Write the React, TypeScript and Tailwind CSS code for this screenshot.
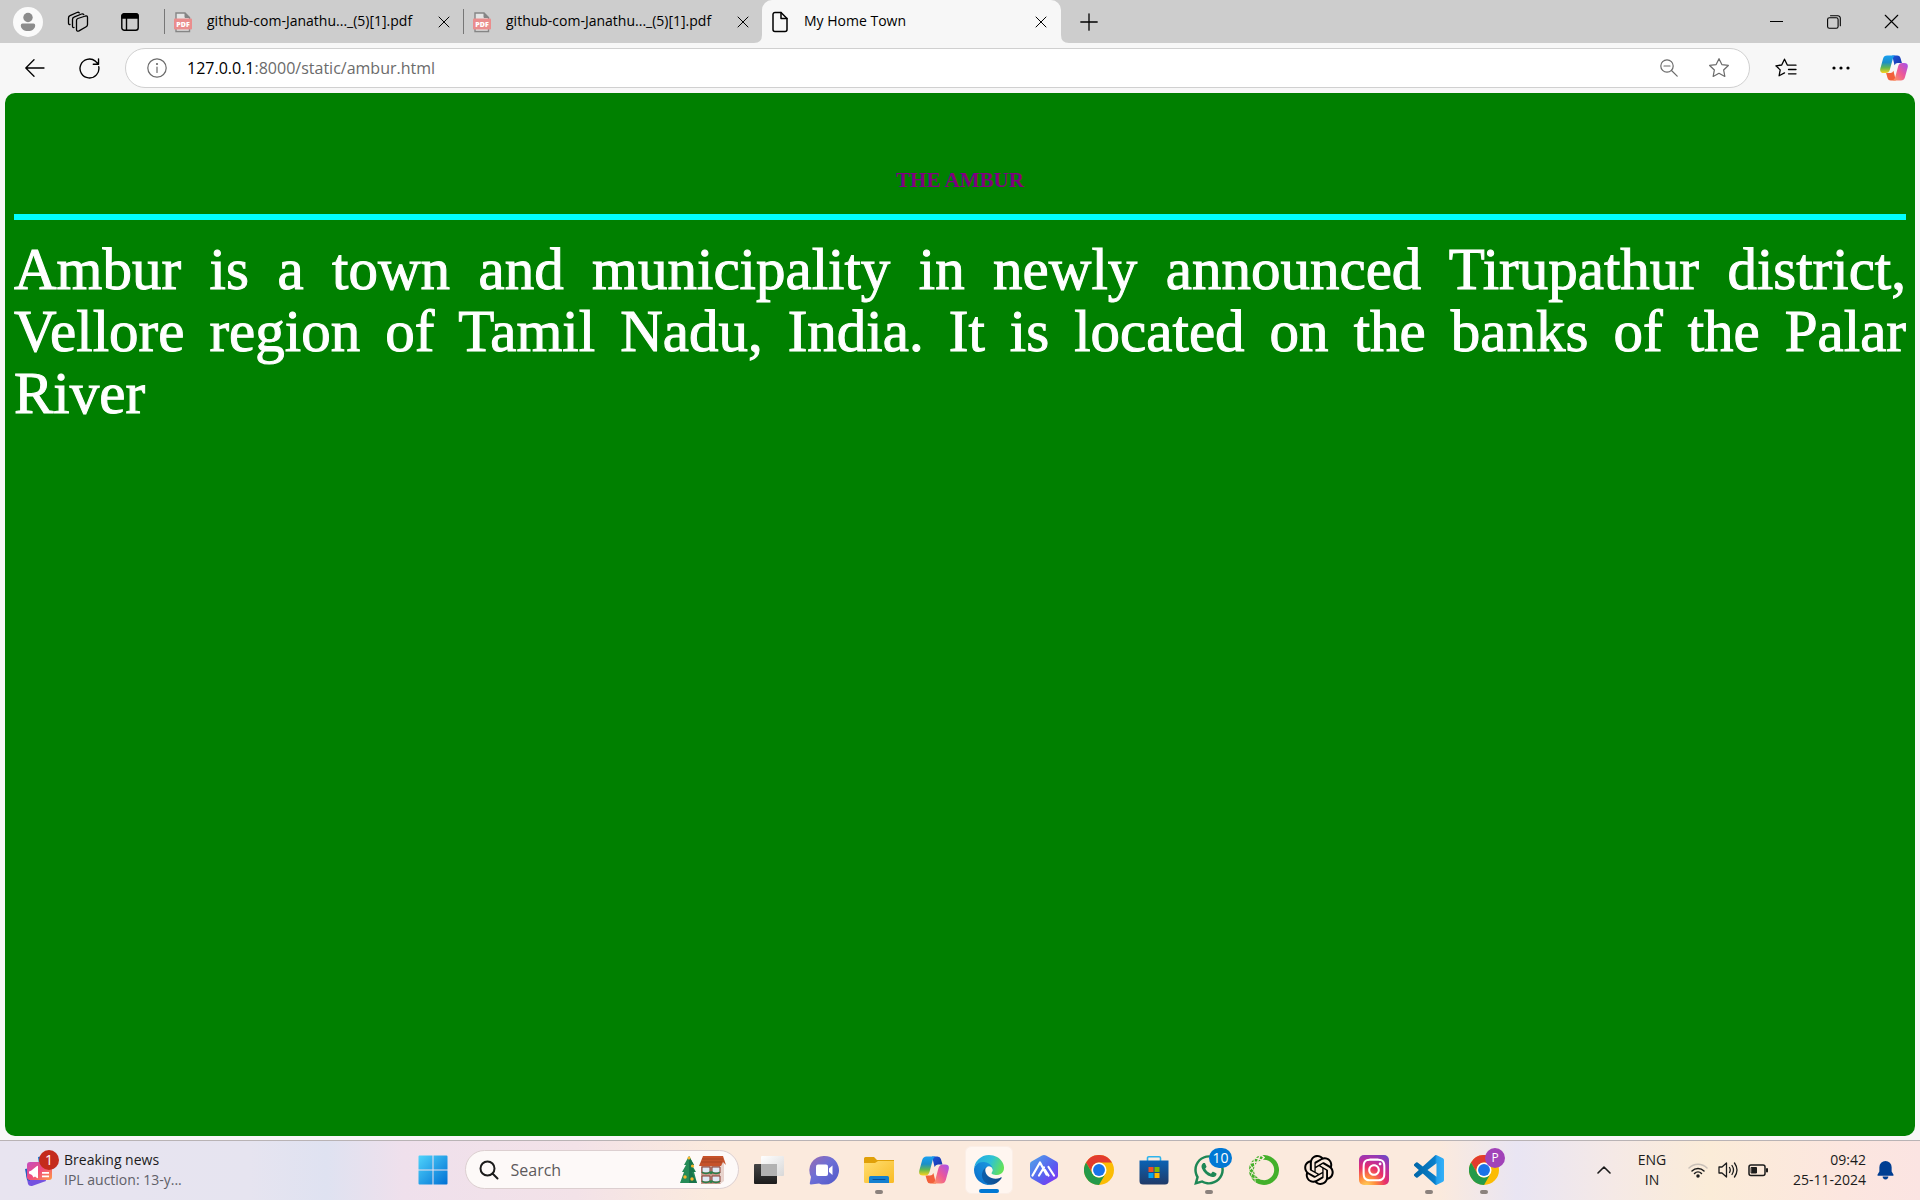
import React from "react";
import { FaInstagram, FaWhatsapp } from "react-icons/fa";
import { RiOpenaiFill } from "react-icons/ri";
import { SiAnaconda } from "react-icons/si";

const line = { fill: "none", stroke: "currentColor", strokeLinecap: "round", strokeLinejoin: "round" } as const;

function PdfIcon() {
  return (
    <svg viewBox="0 0 20 22" className="h-[22px] w-5 shrink-0">
      <path d="M3 2h9l4.500 4.500V20.500H3z" fill="#e4e4e4" stroke="#858585" strokeWidth="1.400" />
      <path d="M12 2v4.500h4.500" fill="#858585" stroke="#858585" />
      <rect x="1" y="7.500" width="18" height="11" rx="1" fill="#ea8d8d" />
      <text x="10" y="15.800" textAnchor="middle" fontSize="7" fontWeight="800" fill="#fff" fontFamily="Open Sans, sans-serif">PDF</text>
    </svg>
  );
}

function Cross({ className }: { className: string }) {
  return (
    <svg viewBox="0 0 12 12" className={className} {...line}>
      <path d="M1 1l10 10M11 1L1 11" />
    </svg>
  );
}

function PdfTab() {
  return (
    <div className="flex h-full w-[299px] items-center pr-2 pl-2">
      <PdfIcon />
      <span className="ml-3.5 flex-1 pb-0.5 text-sm whitespace-nowrap">github-com-Janathu..._(5)[1].pdf</span>
      <button type="button" aria-label="Close tab" className="flex h-6 w-6 items-center justify-center">
        <Cross className="h-3 w-3" />
      </button>
    </div>
  );
}

function TitleBar() {
  return (
    <header className="flex h-[43px] items-center bg-[#cdcdcd]">
      <button type="button" aria-label="Profile" className="ml-3 flex h-8 w-8 items-center justify-center">
        <svg viewBox="0 0 30 30" className="h-[30px] w-[30px]">
          <circle cx="15" cy="15" r="15" fill="#fafafa" />
          <circle cx="15" cy="10.500" r="4.700" fill="#8c8c8c" />
          <path d="M9.500 16.500h11a1.700 1.700 0 0 1 1.700 1.700c0 3.500-3 5.800-7.200 5.800s-7.200-2.300-7.200-5.800a1.700 1.700 0 0 1 1.700-1.700z" fill="#8c8c8c" />
        </svg>
      </button>
      <button type="button" aria-label="Workspaces" className="ml-[22px] flex h-8 w-6 items-center justify-center">
        <svg viewBox="0 0 22 22" className="h-[22px] w-[22px]" {...line} strokeWidth="1.300">
          <path d="M9.500 9.500q0-1.500 1.300-2l7.700-2.500q2-.5 2 1.500v7q0 1.500-1.300 2.200l-7.200 4.200q-2.500 1-2.500-1.500z" />
          <path d="M7 16.500q-1.500.5-1.500-1.500V8.500q0-1.700 1.500-2.300L14.500 3q1.500-.6 2.300.6" />
          <path d="M3 13.500q-1.500.3-1.500-1.500V7q0-1.700 1.500-2.300L10 1.500q1.500-.6 2.300.4" />
        </svg>
      </button>
      <button type="button" aria-label="Tab actions" className="ml-7 flex h-8 w-6 items-center justify-center">
        <svg viewBox="0 0 18 18" className="h-[18px] w-[18px]" {...line} strokeWidth="1.400">
          <rect x=".8" y=".8" width="16.400" height="16.400" rx="2.500" />
          <path d="M1 5V3a2 2 0 0 1 2-2h12a2 2 0 0 1 2 2v2z" fill="currentColor" />
          <path d="M5.500 5v12" />
        </svg>
      </button>
      <div className="ml-[22px] h-[25px] w-px bg-[#777]" />
      <PdfTab />
      <div className="-ml-px h-[25px] w-px bg-[#777]" />
      <PdfTab />
      <div className="relative -ml-px flex h-full w-[299px] items-center rounded-t-[10px] bg-[#f7f7f7] pr-2 pl-2">
        <svg viewBox="0 0 8 8" className="absolute bottom-0 -left-2 h-2 w-2"><path d="M8 0v8H0q8 0 8-8" fill="#f7f7f7" /></svg>
        <svg viewBox="0 0 8 8" className="absolute -right-2 bottom-0 h-2 w-2"><path d="M0 0v8h8Q0 8 0 0" fill="#f7f7f7" /></svg>
        <svg viewBox="0 0 20 22" className="h-[22px] w-5" {...line} strokeWidth="1.500">
          <path d="M5 1.500h6L17 7.500v11a2 2 0 0 1-2 2H5a2 2 0 0 1-2-2v-15a2 2 0 0 1 2-2z" />
          <path d="M11 1.500v6h6" />
        </svg>
        <span className="ml-3.5 flex-1 pb-0.5 text-sm">My Home Town</span>
        <button type="button" aria-label="Close tab" className="flex h-6 w-6 items-center justify-center">
          <Cross className="h-3 w-3" />
        </button>
      </div>
      <button type="button" aria-label="New tab" className="ml-3 flex h-8 w-8 items-center justify-center">
        <svg viewBox="0 0 18 18" className="h-[18px] w-[18px]" {...line}><path d="M9 .8v16.400M.8 9h16.400" strokeWidth="1.300" /></svg>
      </button>
      <div className="ml-auto flex h-full">
        <button type="button" aria-label="Minimize" className="flex w-[57px] items-center justify-center">
          <span className="h-px w-[13px] bg-black" />
        </button>
        <button type="button" aria-label="Restore" className="flex w-[57px] items-center justify-center">
          <svg viewBox="0 0 14 14" className="h-3.5 w-3.5" {...line} strokeWidth="1.100">
            <rect x=".6" y="2.800" width="10.500" height="10.500" rx="1.800" />
            <path d="M3.500.7h7.200a2.500 2.500 0 0 1 2.600 2.500v7.500" />
          </svg>
        </button>
        <button type="button" aria-label="Close" className="flex w-[58px] items-center justify-center">
          <Cross className="h-[15px] w-[15px] stroke-[0.9]" />
        </button>
      </div>
    </header>
  );
}

const STAR = "M10 1.500l2.600 5.400 5.900.8-4.300 4.100 1.100 5.900-5.300-2.900-5.300 2.900 1.100-5.900L1.500 7.700l5.900-.8z";

function Copilot({ id, className }: { id: string; className: string }) {
  return (
    <svg viewBox="0 0 30 28" className={className}>
      <defs>
        <linearGradient id={id + "a"} x1="0" y1="0" x2="0" y2="1">
          <stop offset="0" stopColor="#18a0f2" /><stop offset=".4" stopColor="#1c8fc8" /><stop offset=".7" stopColor="#65b84f" /><stop offset="1" stopColor="#ffd21c" />
        </linearGradient>
        <linearGradient id={id + "b"} x1="1" y1="0" x2="0" y2="1">
          <stop offset="0" stopColor="#a351f0" /><stop offset=".5" stopColor="#ec5899" /><stop offset="1" stopColor="#ff9b5c" />
        </linearGradient>
        <linearGradient id={id + "c"} x1="0" y1="0" x2="1" y2="1">
          <stop offset="0" stopColor="#1d56d8" /><stop offset="1" stopColor="#1832a8" />
        </linearGradient>
      </defs>
      <path d="M13 .5h5.500q2.700 0 3.400 2.500l1.600 5.500h-4.500q-2.500 0-3.400 2.500z" fill={"url(#" + id + "c)"} />
      <path d="M17 27.500h-5.500q-2.700 0-3.400-2.500l-1.600-5.500H11q2.500 0 3.400-2.500z" fill="#f2603a" />
      <path d="M7.500.5h9q-2 .8-2.700 3.200L10.500 16q-1 3.500-4.500 3.500H4Q-.8 19.500.3 14.500L3.200 4Q4.200.5 7.500.5z" fill={"url(#" + id + "a)"} />
      <path d="M22.500 27.500h-9q2-.8 2.700-3.200L19.500 12q1-3.500 4.500-3.500h2q4.800 0 3.700 5L26.800 24q-1 3.500-4.300 3.500z" fill={"url(#" + id + "b)"} />
    </svg>
  );
}

function Toolbar() {
  return (
    <div className="flex h-[50px] items-center bg-[#f7f7f7]">
      <button type="button" aria-label="Back" className="ml-4 flex h-9 w-[38px] items-center justify-center">
        <svg viewBox="0 0 20 20" className="h-5 w-5" {...line} strokeWidth="1.300"><path d="M19 10H1M9 1.800L.8 10 9 18.200" /></svg>
      </button>
      <button type="button" aria-label="Refresh" className="ml-4 flex h-9 w-[38px] items-center justify-center">
        <svg viewBox="0 0 20 20" className="h-[21px] w-[21px]" {...line} strokeWidth="1.300">
          <path d="M18.800 8.300a9 9 0 1 1-3.200-5.300l2.900 2.700M18.600.8v5.200h-5" />
        </svg>
      </button>
      <div className="ml-[17px] flex h-10 flex-1 items-center rounded-full border border-[#d0d0d0] bg-white text-[#6b6b6b]">
        <svg viewBox="0 0 20 20" className="ml-[21px] h-5 w-5 shrink-0" {...line} strokeWidth="1.200">
          <circle cx="10" cy="10" r="9.200" /><path d="M10 9v5.500" /><circle cx="10" cy="6" r=".5" />
        </svg>
        <div className="ml-5 flex-1 text-base"><a href="#page" aria-label="Page address"><span className="text-black">127.0.0.1</span>:8000/static/ambur.html</a></div>
        <button type="button" aria-label="Zoom" className="flex h-8 w-[50px] items-center justify-center">
          <svg viewBox="0 0 18 18" className="h-[18px] w-[18px]" {...line} strokeWidth="1.200"><circle cx="7" cy="7" r="6.200" /><path d="M11.500 11.500l5.700 5.700M4 7h6" /></svg>
        </button>
        <button type="button" aria-label="Favorite" className="mr-[5px] flex h-8 w-[50px] items-center justify-center">
          <svg viewBox="0 0 20 20" className="h-[22px] w-[22px]" {...line} strokeWidth="1.100"><path d={STAR} /></svg>
        </button>
      </div>
      <button type="button" aria-label="Favorites list" className="ml-2 flex h-9 w-[55px] items-center justify-center">
        <svg viewBox="0 0 22 20" className="h-5 w-[22px]" {...line} strokeWidth="1.300">
          <path d="M13.500 7.200l-1.200-.2L9.500 1.200 6.700 7 .9 7.800l4.300 4.100-1.100 5.900 5.400-2.900M13.500 7.200h7.500M13.500 11.500h7.500M13.500 15.800h7.500" />
        </svg>
      </button>
      <button type="button" aria-label="More" className="flex h-9 w-[55px] items-center justify-center">
        <svg viewBox="0 0 18 4" className="h-1 w-[18px]"><circle cx="2" cy="2" r="1.600" /><circle cx="9" cy="2" r="1.600" /><circle cx="16" cy="2" r="1.600" /></svg>
      </button>
      <button type="button" aria-label="Copilot" className="flex h-9 w-[52px] items-center justify-center">
        <Copilot id="top" className="h-[26px] w-7" />
      </button>
    </div>
  );
}

function Page() {
  return (
    <main id="page" className="mx-[5px] mb-1 flex-1 rounded-[10px] bg-[#008000] px-[9px] pt-[75px] font-['Liberation_Serif',serif]">
      <h1 className="text-center text-[21px] leading-6 font-bold text-[#800080]">THE AMBUR</h1>
      <hr className="mt-[22px] h-1.5 border-0 bg-[#00ffff]" />
      <p className="mt-[18px] text-[59px] leading-[62px] text-white [-webkit-text-stroke:1px_white]">
        <span className="block whitespace-nowrap [text-align-last:justify]">Ambur is a town and municipality in newly announced Tirupathur district,</span>
        <span className="block whitespace-nowrap [text-align-last:justify]">Vellore region of Tamil Nadu, India. It is located on the banks of the Palar</span>
        <span className="block">River</span>
      </p>
    </main>
  );
}

function News() {
  return (
    <svg viewBox="0 0 36 40" className="h-10 w-9 shrink-0">
      <defs>
        <linearGradient id="news" x1="0" y1="0" x2="1" y2="1"><stop offset="0" stopColor="#c44dc0" /><stop offset=".5" stopColor="#f04c7c" /><stop offset="1" stopColor="#ff9a45" /></linearGradient>
      </defs>
      <path d="M14 7l14-3 3 14-15 3z" fill="#1473d0" />
      <path d="M2 24l18-2 2 9-14 5q-3 .5-4-2z" fill="#7552e0" />
      <path d="M1 19l5-1v13l-3-1z" fill="#245fc0" />
      <rect x="3" y="12" width="25" height="18" rx="3" fill="url(#news)" />
      <path d="M5 21.500l2-.8 6-4.700q1-.5 1 .5v11q0 1-1 .5l-2-1.500-1.500 1-1.500-2.500-3-1.500zM18 22h7v1.700h-7zM18 25.500h7v1.700h-7z" fill="#fff" />
      <circle cx="25" cy="10" r="10" fill="#c42b1c" />
      <text x="25" y="15" textAnchor="middle" fontSize="14" fill="#fff" fontFamily="Open Sans, sans-serif">1</text>
    </svg>
  );
}

function FestiveArt() {
  return (
    <svg viewBox="0 0 46 30" className="h-[30px] w-[46px]">
      <path d="M9 1l5 9h-2l4 7h-2l3 11H0l4-11H2l4-7H4z" fill="#258b57" />
      <path d="M9 1l5 9h-3l4 7h-3l5 11H9z" fill="#17734a" />
      <g fill="#f7b52c"><circle cx="9" cy="3" r="1.500" /><circle cx="12.500" cy="11" r="1.600" /><circle cx="5" cy="22" r="1.700" /><circle cx="12" cy="24" r="1.700" /></g>
      <path d="M21 11h20v18H21z" fill="#c79a8c" /><path d="M40 9l4-5v22l-4 3z" fill="#e8d3cd" />
      <path d="M23 1h20l3 9-3-3-2 4H19z" fill="#c5522b" />
      <path d="M22 4h21M21 7h21" stroke="#963c20" strokeWidth=".6" />
      {[12, 21].map((y) => (
        <g key={y}><path d={"M22 " + y + "h8v6h-8zM32 " + y + "h8v6h-8z"} fill="#dfeaf6" stroke="#883d35" /><path d={"M22 " + (y + 5) + "q4 3 8 0q1 3 2 0q4 3 8 0"} fill="none" stroke="#27814a" strokeWidth="1.500" /></g>
      ))}
    </svg>
  );
}

function Chrome() {
  return (
    <svg viewBox="0 0 48 48" className="h-[30px] w-[30px]">
      <circle cx="24" cy="24" r="24" fill="#fbbc04" />
      <path d="M3.200 12a24 24 0 0 1 41.600 0H24a12 12 0 0 0-10.400 18z" fill="#e33b2e" />
      <path d="M3.200 12A24 24 0 0 0 24 48l10.400-18A12 12 0 0 1 13.600 30z" fill="#249a49" />
      <circle cx="24" cy="24" r="12" fill="#fff" /><circle cx="24" cy="24" r="9.500" fill="#1a73e8" />
    </svg>
  );
}

function Edge() {
  return (
    <svg viewBox="0 0 256 256" className="h-[30px] w-[30px]">
      <defs>
        <linearGradient id="e1" x1=".2" y1="0" x2="1" y2="0"><stop offset="0" stopColor="#0c5da8" /><stop offset="1" stopColor="#114a8b" /></linearGradient>
        <linearGradient id="e2" x1="1" y1="0" x2="0" y2="1"><stop offset="0" stopColor="#1b9de2" /><stop offset=".6" stopColor="#1280d4" /><stop offset="1" stopColor="#0767c8" /></linearGradient>
        <linearGradient id="e3" x1="0" y1=".2" x2="1" y2=".5"><stop offset="0" stopColor="#24a8e4" /><stop offset=".55" stopColor="#2fc2d4" /><stop offset="1" stopColor="#64e259" /></linearGradient>
      </defs>
      <path fill="url(#e1)" d="M231.070 190.540c-3.430 1.790-6.960 3.370-10.580 4.740a101.580 101.580 0 0 1-35.900 6.460c-47.320 0-88.540-32.550-88.540-74.320A31.480 31.480 0 0 1 112.480 100.100c-42.800 1.800-53.800 46.400-53.800 72.530 0 73.880 68.090 81.370 82.760 81.370 7.910 0 19.840-2.300 27-4.560l1.310-.44a128.340 128.340 0 0 0 66.600-52.800 4 4 0 0 0-5.280-5.660z" />
      <path fill="url(#e2)" d="M105.730 241.420a79.200 79.200 0 0 1-22.740-21.340 80.720 80.720 0 0 1 29.490-120c3.120-1.470 8.450-4.130 15.540-4a32.350 32.350 0 0 1 25.690 13 31.880 31.880 0 0 1 6.360 18.660c0-.21 24.460-79.600-80-79.600-43.900 0-80 41.660-80 78.210a130.150 130.150 0 0 0 12.110 56 128 128 0 0 0 156.380 67.110 75.550 75.550 0 0 1-62.780-8z" />
      <path fill="url(#e3)" d="M152.330 148.860c-.81 1.050-3.300 2.500-3.300 5.660 0 2.610 1.700 5.120 4.720 7.230 14.380 10 41.490 8.680 41.560 8.680a59.560 59.560 0 0 0 30.270-8.350 61.380 61.380 0 0 0 30.430-52.880c.26-22.410-8-37.310-11.340-43.910C223.460 23.840 177.720 0 128.010 0a128 128 0 0 0-128 126.200c.48-36.540 36.800-66.050 80-66.050 3.500 0 23.460.34 42 10.070 16.340 8.580 24.900 18.940 30.850 29.210 6.180 10.670 7.280 24.150 7.280 29.520 0 5.370-2.740 13.330-7.810 19.910z" />
    </svg>
  );
}

const box = "h-[30px] w-[30px]";

const apps: { name: string; icon: React.ReactNode; running?: boolean; active?: boolean; badge?: React.ReactNode }[] = [
  {
    name: "Task view",
    icon: (
      <svg viewBox="0 0 30 30" className={box}>
        <defs>
          <linearGradient id="tv1" x1="0" y1="0" x2="0" y2="1"><stop offset="0" stopColor="#454545" /><stop offset="1" stopColor="#1c1c1c" /></linearGradient>
          <linearGradient id="tv2" x1="0" y1="0" x2="1" y2="1"><stop offset="0" stopColor="#fff" /><stop offset="1" stopColor="#d8d8d8" /></linearGradient>
        </defs>
        <rect x="0" y="9" width="23" height="20" rx="1" fill="url(#tv1)" />
        <rect x="7" y="1" width="23" height="20" rx="1" fill="url(#tv2)" />
        <path d="M7 9h16v12H7z" fill="#b2b2b2" />
      </svg>
    ),
  },
  {
    name: "Chat",
    icon: (
      <svg viewBox="0 0 30 30" className={box}>
        <defs><linearGradient id="chat" x1="0" y1="0" x2="1" y2="1"><stop offset="0" stopColor="#9a6bb0" /><stop offset=".45" stopColor="#6d6fd6" /><stop offset="1" stopColor="#5058c8" /></linearGradient></defs>
        <path d="M15 1a14.300 14.300 0 1 1-5 27.400L2 29.500q-1.500 0-1.200-1.500L2 22A14.300 14.300 0 0 1 15 1z" fill="url(#chat)" />
        <rect x="7" y="9.500" width="12" height="11.500" rx="2" fill="#fff" /><path d="M20 13.500l3.500-3v9.500L20 17z" fill="#fff" />
      </svg>
    ),
  },
  {
    name: "File Explorer",
    running: true,
    icon: (
      <svg viewBox="0 0 30 30" className={box}>
        <defs><linearGradient id="fe" x1="0" y1="0" x2="1" y2="1"><stop offset="0" stopColor="#ffdd70" /><stop offset="1" stopColor="#f9bb24" /></linearGradient></defs>
        <path d="M0 3.500A1.500 1.500 0 0 1 1.500 2H10l3 3h17v8H0z" fill="#e0a008" />
        <path d="M0 8h11l3-2h16v20.500a1.500 1.500 0 0 1-1.500 1.500h-27A1.500 1.500 0 0 1 0 26.500z" fill="url(#fe)" />
        <path d="M5 28v-5.500A1.500 1.500 0 0 1 6.500 21h17a1.500 1.500 0 0 1 1.500 1.500V28z" fill="#1480d0" /><path d="M9 24.500h12" stroke="#0a4e96" strokeLinecap="round" />
      </svg>
    ),
  },
  { name: "Copilot", icon: <Copilot id="bar" className="h-7 w-[30px]" /> },
  { name: "Edge", active: true, icon: <Edge /> },
  {
    name: "Studio",
    icon: (
      <svg viewBox="0 0 30 30" className={box}>
        <defs><linearGradient id="hex" x1="0" y1="0" x2="1" y2="1"><stop offset="0" stopColor="#4fa8e8" /><stop offset=".6" stopColor="#5a5cf0" /><stop offset="1" stopColor="#8b2cf5" /></linearGradient></defs>
        <path d="M15 0q1 0 2 .6l10.500 6Q29 7.500 29 9v12q0 1.500-1.500 2.400l-10.500 6q-2 1.100-4 0l-10.500-6Q1 22.500 1 21V9q0-1.500 1.500-2.400L13 .6Q14 0 15 0z" fill="url(#hex)" />
        <path d="M3.500 20.500L11 7.500l6.500 12M10 20.500l5-8M19.500 12l5.500 8.500M16 15l3.500 5.500" fill="none" stroke="#fff" strokeWidth="2.200" strokeLinecap="round" strokeLinejoin="round" />
      </svg>
    ),
  },
  { name: "Chrome", icon: <Chrome /> },
  {
    name: "Store",
    icon: (
      <svg viewBox="0 0 30 30" className={box}>
        <defs><linearGradient id="st" x1="0" y1="0" x2="0" y2="1"><stop offset="0" stopColor="#0a62b4" /><stop offset="1" stopColor="#203a68" /></linearGradient></defs>
        <path d="M8.500 6V3a1.300 1.300 0 0 1 1.300-1.300h10.400A1.300 1.300 0 0 1 21.500 3v3" fill="none" stroke="#2fb4ec" strokeWidth="1.600" />
        <path d="M.5 5.500h29V26a3.500 3.500 0 0 1-3.500 3.500H4A3.500 3.500 0 0 1 .5 26z" fill="url(#st)" />
        <path d="M9.500 12h5v5h-5z" fill="#f25022" /><path d="M15.500 12h5v5h-5z" fill="#7fba00" /><path d="M9.500 18h5v5h-5z" fill="#00a4ef" /><path d="M15.500 18h5v5h-5z" fill="#ffb900" />
      </svg>
    ),
  },
  {
    name: "WhatsApp",
    running: true,
    icon: <FaWhatsapp className="h-[34px] w-[34px] text-[#1d8755]" />,
    badge: <span className="absolute -top-1 left-6 flex h-5 w-[23px] items-center justify-center rounded-full bg-[#0078d4] text-sm text-white">10</span>,
  },
  { name: "Anaconda", icon: <SiAnaconda className="h-[30px] w-[30px] text-[#43b02a]" /> },
  { name: "ChatGPT", icon: <RiOpenaiFill className="h-9 w-9 text-black" /> },
  {
    name: "Instagram",
    icon: (
      <span className="flex h-[30px] w-[30px] items-center justify-center rounded-[5px] bg-[radial-gradient(circle_at_25%_105%,#ffd85c_0,#ff8a3c_25%,#e8306a_50%,#b32fa5_72%,#5a4fcf_100%)] text-white">
        <FaInstagram className="h-[26px] w-[26px]" />
      </span>
    ),
  },
  {
    name: "VS Code",
    running: true,
    icon: (
      <svg viewBox="0 0 24 24" className={box}>
        <defs><linearGradient id="vs"><stop offset="0" stopColor="#0066a8" /><stop offset=".7" stopColor="#0a7fca" /><stop offset=".76" stopColor="#22a1ee" /><stop offset="1" stopColor="#35b0f8" /></linearGradient></defs>
        <path fill="url(#vs)" d="M23.150 2.587L18.210.21a1.494 1.494 0 0 0-1.705.29l-9.460 8.630-4.120-3.128a.999.999 0 0 0-1.276.057L.327 7.261A1 1 0 0 0 .326 8.740L3.899 12 .326 15.260a1 1 0 0 0 .001 1.479L1.650 17.940a.999.999 0 0 0 1.276.057l4.120-3.128 9.460 8.630a1.492 1.492 0 0 0 1.704.290l4.942-2.377A1.500 1.500 0 0 0 24 20.060V3.939a1.500 1.500 0 0 0-.850-1.352zm-5.146 14.861L10.826 12l7.178-5.448v10.896z" />
      </svg>
    ),
  },
  {
    name: "Chrome profile",
    running: true,
    icon: <Chrome />,
    badge: <span className="absolute -top-1 left-[25px] flex h-5 w-5 items-center justify-center rounded-full bg-[#a142b8] text-xs text-white">P</span>,
  },
];

function Taskbar() {
  return (
    <footer className="grid h-[60px] grid-cols-[1fr_auto_1fr] items-center border-t border-[#b9b3b5] bg-[linear-gradient(90deg,#e8e4f0_0%,#e6e4f0_13%,#dfe2f1_17%,#efe0ec_21%,#f3e2e8_30%,#fbeadd_37%,#fbeadd_75%,#e9e5f3_79%,#f5e9e6_84%,#fbecd8_89%,#fce6df_96%,#fbe4e2_100%)] pb-0.5 text-[#1b1b1b]">
      <button type="button" className="flex items-center pl-6 text-left">
        <News />
        <span className="ml-1 text-sm leading-5">Breaking news<br /><span className="text-[#606068]">IPL auction: 13-y...</span></span>
      </button>
      <div className="flex h-full items-center pr-1">
        <button type="button" aria-label="Start" className="flex h-12 w-14 items-center justify-center">
          <svg viewBox="0 0 30 30" className="h-[30px] w-[30px]">
            <defs><linearGradient id="win" x1="0" y1="0" x2="1" y2="1"><stop offset="0" stopColor="#4fd3fb" /><stop offset="1" stopColor="#0070d4" /></linearGradient></defs>
            <path d="M1.500.5H14.500V14.500H.5V1.500a1 1 0 0 1 1-1zM15.500.5h13a1 1 0 0 1 1 1v13h-14zM.5 15.500h14v14h-13a1 1 0 0 1-1-1zM15.500 15.500h14v13a1 1 0 0 1-1 1h-13z" fill="url(#win)" />
          </svg>
        </button>
        <label className="ml-1 flex h-[39px] w-[274px] items-center rounded-full border border-[#dccfd0] bg-[#fdf9f8] pr-3 pl-[13px]">
          <svg viewBox="0 0 20 20" className="h-5 w-5 shrink-0" {...line} strokeWidth="2"><circle cx="8.500" cy="8.500" r="7" /><path d="M13.500 13.500l5 5" /></svg>
          <input type="text" placeholder="Search" aria-label="Search" className="ml-3 w-0 flex-1 bg-transparent text-base outline-none placeholder:text-[#5e5a5c]" />
          <FestiveArt />
        </label>
        <div className="ml-[3px] flex">
          {apps.map((app) => (
            <button type="button" key={app.name} aria-label={app.name} className="flex h-12 w-[55px] items-center justify-center">
              <span className={app.active ? "relative flex h-12 w-12 items-center justify-center rounded-md border border-[#fbeee6] bg-[#fff6f0]" : "relative flex h-12 w-12 items-center justify-center"}>
                {app.icon}
                {app.badge && <span className="absolute top-1.5 left-0">{app.badge}</span>}
                {app.active && <span className="absolute bottom-0 h-1 w-5 rounded-full bg-[#0078d4]" />}
                {app.running && <span className="absolute bottom-0 h-1 w-2 rounded-full bg-[#8b827d]" />}
              </span>
            </button>
          ))}
        </div>
      </div>
      <div className="flex items-center justify-end text-sm leading-5">
        <button type="button" aria-label="Hidden icons" className="mr-3.5 flex h-10 w-8 items-center justify-center">
          <svg viewBox="0 0 14 8" className="h-2 w-3.5" {...line} strokeWidth="1.600"><path d="M1 7l6-6 6 6" /></svg>
        </button>
        <button type="button" className="mr-2 w-9 text-center">ENG<br />IN</button>
        <button type="button" aria-label="Network, volume and battery" className="flex w-[100px] items-center justify-center gap-[10px]">
          <svg viewBox="0 0 20 16" className="h-4 w-5" {...line} strokeWidth="1.500">
            <path d="M1 6a12.500 12.500 0 0 1 18 0" stroke="#c9c0b8" /><path d="M4 9a8.500 8.500 0 0 1 12 0M6.500 11.500a5 5 0 0 1 7 0" /><circle cx="10" cy="14" r="1" fill="currentColor" />
          </svg>
          <svg viewBox="0 0 20 18" className="h-[18px] w-5" {...line} strokeWidth="1.300">
            <path d="M1 6h3l4.500-4v14L4 12H1zM11.500 6.500q1.500 2.500 0 5M14 4.500q3 4.500 0 9M16.500 2q5 7 0 14" />
          </svg>
          <svg viewBox="0 0 20 14" className="h-3.5 w-5" {...line} strokeWidth="1.500"><rect x="1" y="2" width="16" height="10.500" rx="2" /><path d="M3.500 4.500h5V10h-5z" fill="currentColor" strokeWidth="1" /><path d="M19 6v2.500" strokeWidth="2" /></svg>
        </button>
        <button type="button" className="ml-1 w-[84px] text-right whitespace-nowrap">09:42<br />25-11-2024</button>
        <button type="button" aria-label="Notifications" className="mr-[26px] ml-[11px]">
          <svg viewBox="0 0 18 20" className="block h-5 w-[17px]" fill="#003e92"><path d="M9 .5a6.500 6.500 0 0 1 6.500 6.500v4.500l2 3.500q.4 1-.7 1H1.200q-1.100 0-.7-1l2-3.500V7A6.500 6.500 0 0 1 9 .5zM6 17h6a3 3 0 0 1-6 0z" /></svg>
        </button>
      </div>
    </footer>
  );
}

export default function App() {
  return (
    <div className="flex min-h-screen flex-col bg-[#f7f7f7] font-['Open_Sans','Noto_Sans',sans-serif] text-black">
      <TitleBar />
      <Toolbar />
      <Page />
      <Taskbar />
    </div>
  );
}
